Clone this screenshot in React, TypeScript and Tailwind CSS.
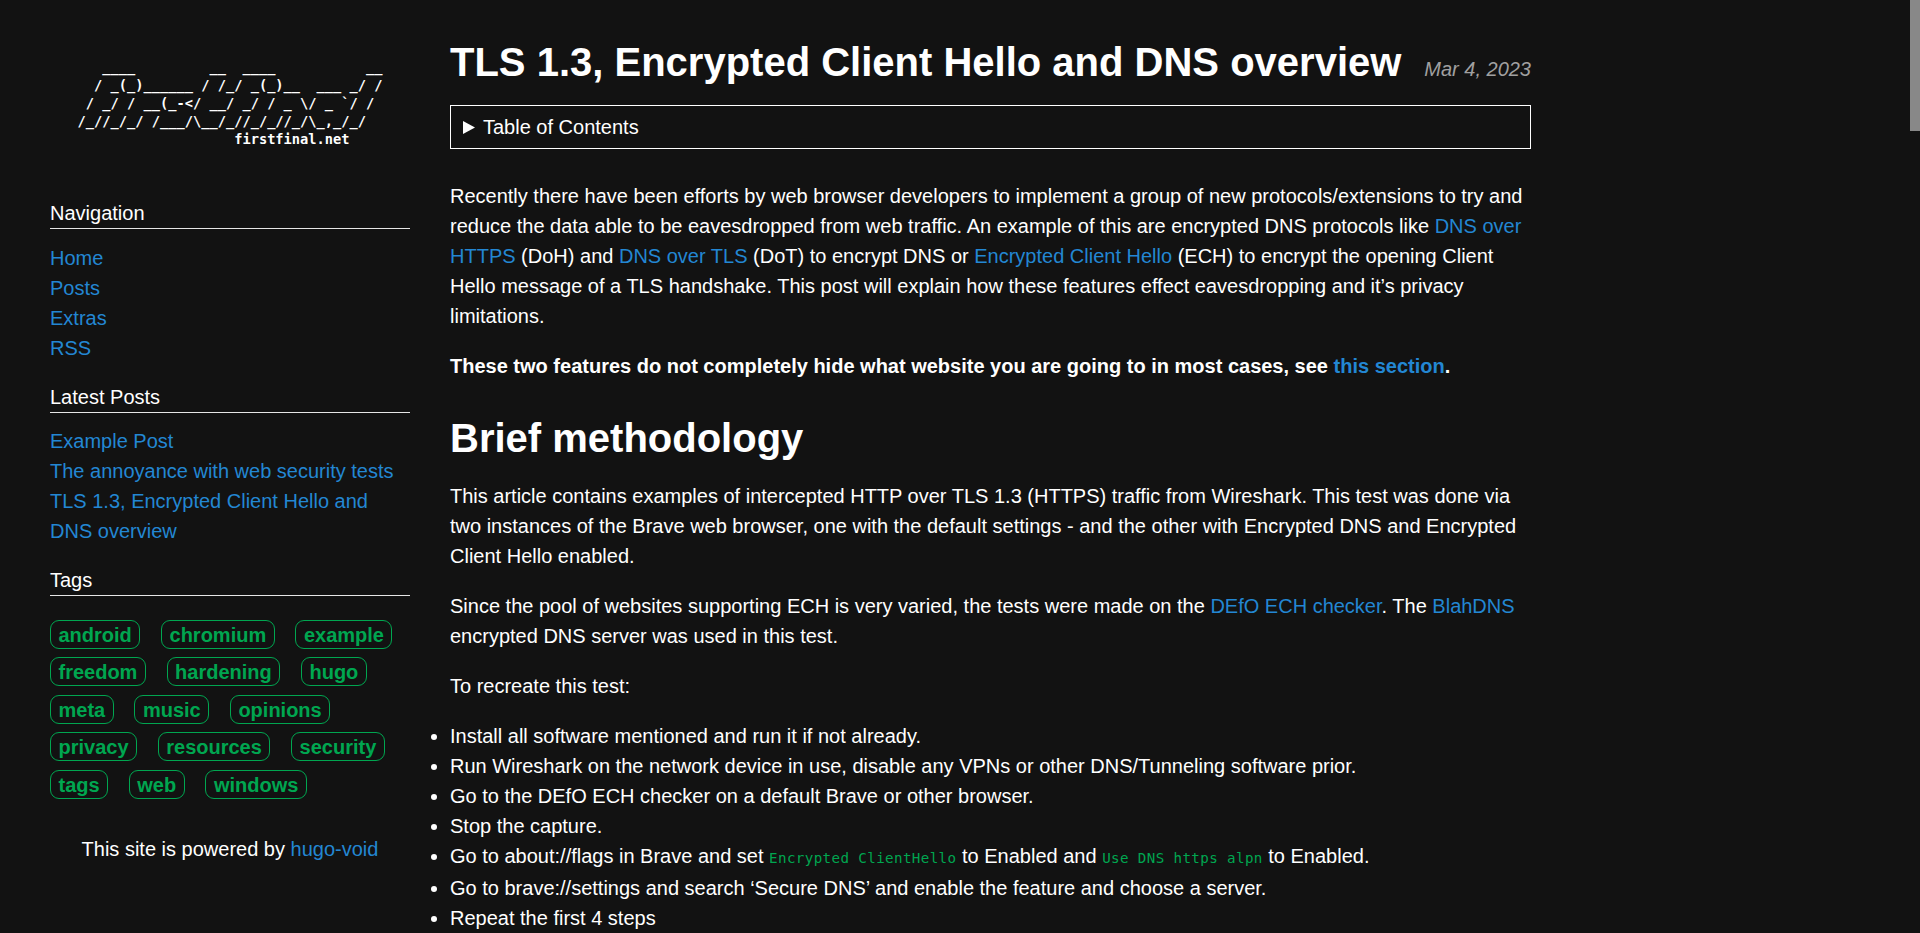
import React from "react";

const logo = [
  "   ____         __  ____           __",
  "  / _(_)______ / /_/ _(_)__  ___ _/ /",
  " / _/ / __(_-</ __/ _/ / _ \\/ _ `/ /",
  "/_//_/_/ /___/\\__/_//_/_//_/\\_,_/_/",
].join("\n");

const tags = [
  "android", "chromium", "example", "freedom", "hardening", "hugo", "meta", "music",
  "opinions", "privacy", "resources", "security", "tags", "web", "windows",
];

function Link({ children }: { children: React.ReactNode }) {
  return <a href="#" className="text-[#2387d3]">{children}</a>;
}

function Code({ children }: { children: React.ReactNode }) {
  return (
    <code className="font-['DejaVu_Sans_Mono',monospace] text-[14.2px] leading-none tracking-[0.38px] text-[#00a650]">
      {children}
    </code>
  );
}

function Heading({ children }: { children: React.ReactNode }) {
  return <h2 className="h-[31px] border-b border-[#e6e6e6] leading-[30px]">{children}</h2>;
}

export default function App() {
  return (
    <div className="flex h-[933px] w-full overflow-hidden bg-[#121212] font-['Liberation_Sans',Arial,sans-serif] text-[20px] leading-[30px] text-white">
      <aside className="ml-[50px] w-[360px] shrink-0">
        <pre className="mt-[58px] h-[140px] pl-[27.6px] font-['DejaVu_Sans_Mono',monospace] text-[13.7px] leading-[18px] font-bold">
          {logo}
          {"\n" + " ".repeat(19) + "firstfinal.net"}
        </pre>
        <Heading>Navigation</Heading>
        <ul className="mt-[14px] mb-[19px]">
          {["Home", "Posts", "Extras", "RSS"].map((t) => (
            <li key={t}><Link>{t}</Link></li>
          ))}
        </ul>
        <Heading>Latest Posts</Heading>
        <ul className="mt-[13px] mb-[19px]">
          <li><Link>Example Post</Link></li>
          <li><Link>The annoyance with web security tests</Link></li>
          <li><Link>TLS 1.3, Encrypted Client Hello and DNS overview</Link></li>
        </ul>
        <Heading>Tags</Heading>
        <div className="mt-[24px] flex flex-wrap gap-x-[20.7px] gap-y-[8.4px]">
          {tags.map((t) => (
            <a key={t} href="#" className="h-[29px] rounded-[9px] border border-[#00a650] px-[7.5px] leading-[29px] font-bold text-[#00a650]">
              {t}
            </a>
          ))}
        </div>
        <p className="mt-[35px] text-center">
          This site is powered by <Link>hugo-void</Link>
        </p>
      </aside>

      <main className="ml-[40px] w-[1081px] shrink-0 whitespace-nowrap">
        <header className="mt-[32px] flex h-[60px] items-baseline justify-between">
          <h1 className="text-[40px] leading-[60px] font-bold">TLS 1.3, Encrypted Client Hello and DNS overview</h1>
          <time className="text-[#a0a0a0] italic">Mar 4, 2023</time>
        </header>
        <div className="mt-[13px] flex h-[44px] items-center border border-white pl-[12px]">
          <svg className="mr-[8px] h-[13px] w-[12px]" viewBox="0 0 12 13" fill="white">
            <path d="M0 0 L12 6.5 L0 13 Z" />
          </svg>
          Table of Contents
        </div>
        <p className="mt-[32px]">
          Recently there have been efforts by web browser developers to implement a group of new protocols/extensions to try and<br />
          reduce the data able to be eavesdropped from web traffic. An example of this are encrypted DNS protocols like <Link>DNS over<br />
          HTTPS</Link> (DoH) and <Link>DNS over TLS</Link> (DoT) to encrypt DNS or <Link>Encrypted Client Hello</Link> (ECH) to encrypt the opening Client<br />
          Hello message of a TLS handshake. This post will explain how these features effect eavesdropping and it’s privacy<br />
          limitations.
        </p>
        <p className="mt-[20px] font-bold">
          These two features do not completely hide what website you are going to in most cases, see <Link>this section</Link>.
        </p>
        <h1 className="mt-[27px] text-[40px] leading-[60px] font-bold">Brief methodology</h1>
        <p className="mt-[13px]">
          This article contains examples of intercepted HTTP over TLS 1.3 (HTTPS) traffic from Wireshark. This test was done via<br />
          two instances of the Brave web browser, one with the default settings - and the other with Encrypted DNS and Encrypted<br />
          Client Hello enabled.
        </p>
        <p className="mt-[20px]">
          Since the pool of websites supporting ECH is very varied, the tests were made on the <Link>DEfO ECH checker</Link>. The <Link>BlahDNS</Link><br />
          encrypted DNS server was used in this test.
        </p>
        <p className="mt-[20px]">To recreate this test:</p>
        <ul className="mt-[20px] list-disc">
          <li>Install all software mentioned and run it if not already.</li>
          <li>Run Wireshark on the network device in use, disable any VPNs or other DNS/Tunneling software prior.</li>
          <li>Go to the DEfO ECH checker on a default Brave or other browser.</li>
          <li>Stop the capture.</li>
          <li className="h-[32px]">
            Go to about://flags in Brave and set <Code>Encrypted ClientHello</Code> to Enabled and <Code>Use DNS https alpn</Code> to Enabled.
          </li>
          <li>Go to brave://settings and search ‘Secure DNS’ and enable the feature and choose a server.</li>
          <li>Repeat the first 4 steps</li>
        </ul>
      </main>
      <div className="ml-auto h-[131px] w-[10px] bg-[#888888]" />
    </div>
  );
}
